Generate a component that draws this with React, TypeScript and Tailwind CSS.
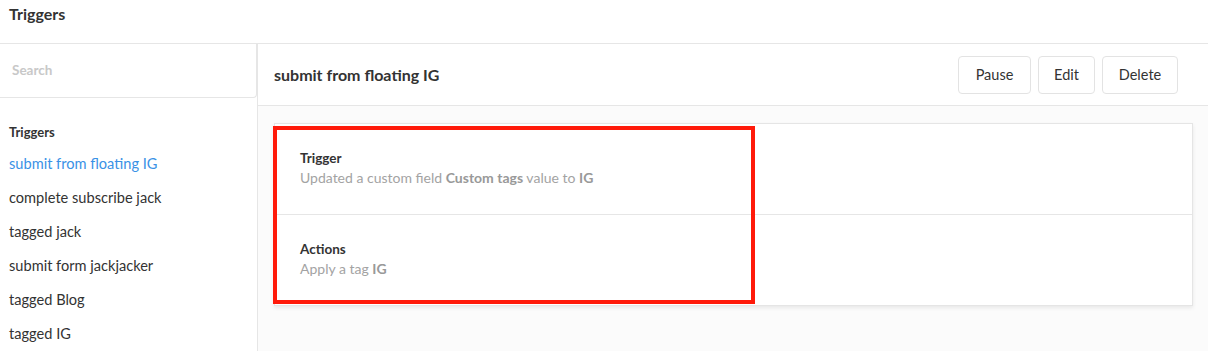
const triggers = [
  'submit from floating IG',
  'complete subscribe jack',
  'tagged jack',
  'submit form jackjacker',
  'tagged Blog',
  'tagged IG',
];

export default function App() {
  return (
    <div className="w-[1208px] h-[351px] overflow-hidden bg-white text-[#333] font-['Lato',sans-serif] flex flex-col">
      <header className="h-[44px] shrink-0 border-b border-[#e6e6e6] px-[9px] pt-[5px]">
        <h1 className="text-[16px] font-bold leading-[18px]">Triggers</h1>
      </header>
      <div className="flex flex-1 min-h-0">
        <aside className="w-[257px] shrink-0 flex flex-col">
          <div className="h-[54px] border-b border-r border-[#e6e6e6] rounded-br-[4px] flex items-center px-[12px]">
            <input
              placeholder="Search"
              className="w-full text-[13.5px] font-bold placeholder:text-[#c8c8c8] outline-none bg-transparent"
            />
          </div>
          <div className="px-[9px] pt-[26px]">
            <div className="text-[13px] font-bold leading-[16px] text-[#333]">Triggers</div>
            <ul className="mt-[7px]">
              {triggers.map((t, i) => (
                <li
                  key={t}
                  className={`h-[34px] flex items-center text-[14.6px] ${i === 0 ? 'text-[#3a92e6]' : 'text-[#333]'}`}
                >
                  {t}
                </li>
              ))}
            </ul>
          </div>
        </aside>
        <main className="flex-1 border-l border-[#e6e6e6] flex flex-col bg-[#fbfbfb]">
          <div className="h-[62px] shrink-0 bg-white border-b border-[#e6e6e6] flex items-center justify-between pl-[16px] pr-[30px]">
            <h2 className="text-[16px] font-bold">submit from floating IG</h2>
            <div className="flex gap-[7px]">
              <button className="h-[38px] w-[73px] border border-[#e3e3e3] rounded-[4px] bg-white text-[14.5px]">Pause</button>
              <button className="h-[38px] w-[57px] border border-[#e3e3e3] rounded-[4px] bg-white text-[14.5px]">Edit</button>
              <button className="h-[38px] w-[76px] border border-[#e3e3e3] rounded-[4px] bg-white text-[14.5px]">Delete</button>
            </div>
          </div>
          <div className="pt-[17px] pl-[16px] pr-[15px]">
            <div className="relative bg-white border border-[#e5e5e5] shadow-[0_2px_4px_rgba(0,0,0,0.08)]">
              <section className="h-[91px] border-b border-[#e6e6e6] px-[25px] pt-[26px]">
                <div className="text-[13.5px] font-bold leading-[16px]">Trigger</div>
                <div className="text-[14px] text-[#a3a3a3] leading-[20px] mt-[2px]">
                  Updated a custom field <b className="text-[#999]">Custom tags</b> value to <b className="text-[#999]">IG</b>
                </div>
              </section>
              <section className="h-[90px] px-[25px] pt-[26px]">
                <div className="text-[13.5px] font-bold leading-[16px]">Actions</div>
                <div className="text-[14px] text-[#a3a3a3] leading-[20px] mt-[2px]">
                  Apply a tag <b className="text-[#999]">IG</b>
                </div>
              </section>
              <div className="absolute left-[-2px] top-[2px] w-[482px] h-[178px] border-[4px] border-[#ff1a0a]" />
            </div>
          </div>
        </main>
      </div>
    </div>
  );
}
